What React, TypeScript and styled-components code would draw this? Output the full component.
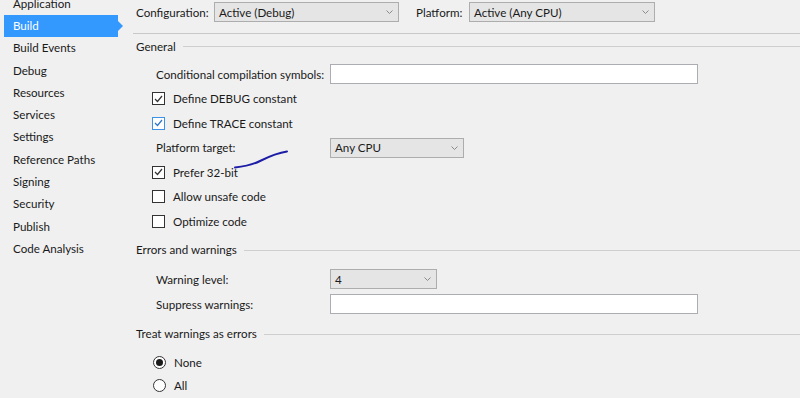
import React from 'react';
import styled, { createGlobalStyle } from 'styled-components';

const GlobalStyle = createGlobalStyle`
  html, body {
    margin: 0;
    padding: 0;
    background: #f0f0f0;
  }
  body {
    font-family: Lato, "Noto Sans", Arial, sans-serif;
    font-size: 11.6px;
    color: #1a1a1a;
    overflow: hidden;
  }
`;

const Window = styled.div`
  position: relative;
  display: flex;
  width: 800px;
  height: 398px;
  overflow: hidden;
  background: #f0f0f0;
`;

// Liste des onglets à gauche
const Sidebar = styled.nav`
  width: 128px;
  flex-shrink: 0;
  padding-left: 4px;
  box-sizing: border-box;
`;

const TabList = styled.ul`
  list-style: none;
  margin: -7.3px 0 0;
  padding: 0;
`;

const Tab = styled.li<{ $active?: boolean }>`
  position: relative;
  width: 114px;
  height: 22.3px;
  line-height: 22.3px;
  padding-left: 9px;
  box-sizing: border-box;
  background: ${p => (p.$active ? '#3399ff' : 'transparent')};
  color: ${p => (p.$active ? '#ffffff' : '#1a1a1a')};

  &::after {
    content: '';
    display: ${p => (p.$active ? 'block' : 'none')};
    position: absolute;
    right: -5px;
    top: 6px;
    border-top: 5px solid transparent;
    border-bottom: 5px solid transparent;
    border-left: 5px solid #3399ff;
  }
`;

const Content = styled.main`
  flex: 1;
  display: flex;
  flex-direction: column;
  padding-left: 5px;
`;

const TopBar = styled.div`
  display: flex;
  align-items: center;
  height: 24px;
  padding-left: 3px;
`;

const TopLabel = styled.span<{ $w: number; $ml?: number }>`
  width: ${p => p.$w}px;
  margin-left: ${p => p.$ml ?? 0}px;
  white-space: nowrap;
`;

const Divider = styled.hr`
  margin: 9px 0 2px;
  border: none;
  border-top: 1px solid #c8c8c8;
  height: 0;
`;

const GroupHeader = styled.div<{ $gap: number }>`
  display: flex;
  align-items: center;
  height: 20px;
  margin-top: ${p => p.$gap}px;
  padding-left: 3px;
  gap: 7px;

  &::after {
    content: '';
    flex: 1;
    border-top: 1px solid #cfcfcf;
    margin-top: 1px;
  }
`;

const Rows = styled.div<{ $gap: number }>`
  display: flex;
  flex-direction: column;
  margin-top: ${p => p.$gap}px;
  padding-left: 19px;
`;

const FieldRow = styled.div<{ $h: number }>`
  display: grid;
  grid-template-columns: 174px auto;
  align-items: center;
  height: ${p => p.$h}px;
  padding-left: 4px;
  white-space: nowrap;
`;

const CheckRow = styled.label<{ $h: number }>`
  display: flex;
  align-items: center;
  gap: 8px;
  height: ${p => p.$h}px;
`;

const Box = styled.span<{ $hover?: boolean }>`
  display: inline-flex;
  align-items: center;
  justify-content: center;
  width: 11px;
  height: 11px;
  border: 1px solid ${p => (p.$hover ? '#3c92e6' : '#333333')};
  background: #ffffff;
`;

const Radio = styled.span`
  display: inline-flex;
  align-items: center;
  justify-content: center;
  width: 11px;
  height: 11px;
  border: 1px solid #333333;
  border-radius: 50%;
  background: #ffffff;
  margin-left: 1px;
`;

const Dot = styled.span`
  width: 7px;
  height: 7px;
  border-radius: 50%;
  background: #1a1a1a;
`;

const Select = styled.div<{ $w: number }>`
  display: flex;
  align-items: center;
  justify-content: space-between;
  width: ${p => p.$w}px;
  height: 20px;
  box-sizing: border-box;
  border: 1px solid #adadad;
  background: #e5e5e5;
  padding: 0 5px 0 4px;
`;

const TextBox = styled.div`
  width: 368px;
  height: 20px;
  box-sizing: border-box;
  border: 1px solid #abadb3;
  background: #ffffff;
`;

const Scribble = styled.svg`
  position: absolute;
  left: 230px;
  top: 145px;
  pointer-events: none;
`;

const Chevron = () => (
  <svg width="7" height="4" viewBox="0 0 7 4">
    <polyline points="0.5,0.5 3.5,3.5 6.5,0.5" fill="none" stroke="#8a8a8a" strokeWidth="1" />
  </svg>
);

const Check = ({ color }: { color: string }) => (
  <svg width="9" height="8" viewBox="0 0 9 8">
    <polyline points="1,4 3.5,6.5 8,1" fill="none" stroke={color} strokeWidth="1.2" />
  </svg>
);

const CheckBox = ({ checked, hover }: { checked?: boolean; hover?: boolean }) => (
  <Box $hover={hover}>{checked && <Check color={hover ? '#2a76cc' : '#333333'} />}</Box>
);

const tabs = [
  'Application',
  'Build',
  'Build Events',
  'Debug',
  'Resources',
  'Services',
  'Settings',
  'Reference Paths',
  'Signing',
  'Security',
  'Publish',
  'Code Analysis',
];

export default function App() {
  return (
    <>
      <GlobalStyle />
      <Window>
        <Sidebar>
          <TabList>
            {tabs.map(t => (
              <Tab key={t} $active={t === 'Build'}>{t}</Tab>
            ))}
          </TabList>
        </Sidebar>

        <Content>
          <TopBar>
            <TopLabel $w={78}>Configuration:</TopLabel>
            <Select $w={185}>
              <span>Active (Debug)</span>
              <Chevron />
            </Select>
            <TopLabel $w={53} $ml={17}>Platform:</TopLabel>
            <Select $w={186}>
              <span>Active (Any CPU)</span>
              <Chevron />
            </Select>
          </TopBar>
          <Divider />

          <GroupHeader $gap={0}>General</GroupHeader>
          <Rows $gap={6}>
            <FieldRow $h={24.5}>
              <span>Conditional compilation symbols:</span>
              <TextBox />
            </FieldRow>
            <CheckRow $h={24.5}>
              <CheckBox checked />
              Define DEBUG constant
            </CheckRow>
            <CheckRow $h={24.5}>
              <CheckBox checked hover />
              Define TRACE constant
            </CheckRow>
            <FieldRow $h={24.5}>
              <span>Platform target:</span>
              <Select $w={134}>
                <span>Any CPU</span>
                <Chevron />
              </Select>
            </FieldRow>
            <CheckRow $h={24.5}>
              <CheckBox checked />
              Prefer 32-bit
            </CheckRow>
            <CheckRow $h={24.5}>
              <CheckBox />
              Allow unsafe code
            </CheckRow>
            <CheckRow $h={24.5}>
              <CheckBox />
              Optimize code
            </CheckRow>
          </Rows>

          <GroupHeader $gap={6}>Errors and warnings</GroupHeader>
          <Rows $gap={7}>
            <FieldRow $h={25}>
              <span>Warning level:</span>
              <Select $w={107}>
                <span>4</span>
                <Chevron />
              </Select>
            </FieldRow>
            <FieldRow $h={25}>
              <span>Suppress warnings:</span>
              <TextBox />
            </FieldRow>
          </Rows>

          <GroupHeader $gap={7}>Treat warnings as errors</GroupHeader>
          <Rows $gap={7}>
            <CheckRow $h={23}>
              <Radio><Dot /></Radio>
              None
            </CheckRow>
            <CheckRow $h={23}>
              <Radio />
              All
            </CheckRow>
          </Rows>
        </Content>

        <Scribble width="64" height="30" viewBox="0 0 64 30">
          <path
            d="M5 22.5 C 14 21.5, 22 20, 30 16 S 46 8, 57 6.5"
            fill="none"
            stroke="#1c1ca6"
            strokeWidth="2"
            strokeLinecap="round"
          />
        </Scribble>
      </Window>
    </>
  );
}
